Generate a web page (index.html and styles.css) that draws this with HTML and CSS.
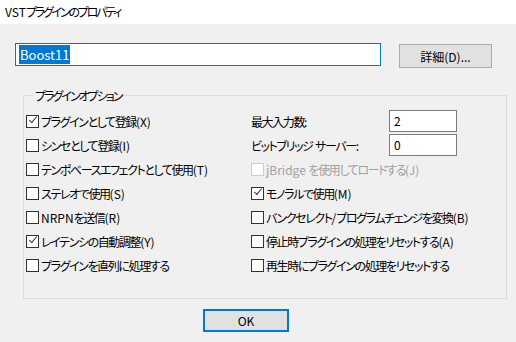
FILE: index.html
```
<!DOCTYPE html>
<html lang="ja">
<head>
    <meta charset="UTF-8">
    <title>VSTプラグインのプロパティ</title>
    <link rel="stylesheet" href="styles.css">
</head>
<body>
    <div class="titlebar"><span class="en">VST</span>プラグインのプロパティ</div>

    <div class="dialog">
        <div class="top-row">
            <div class="name-box"><span class="selected">Boost11</span></div>
            <button class="btn details">詳細(D)...</button>
        </div>

        <div class="group">
            <span class="group-title">プラグインオプション</span>
            <div class="options">
                <label class="check"><span class="box on"></span>プラグインとして登録<span class="en">(X)</span></label>
                <div class="field"><span class="field-label">最大入力数<span class="en">:</span></span><span class="num-box">2</span></div>

                <label class="check"><span class="box"></span>シンセとして登録<span class="en">(I)</span></label>
                <div class="field"><span class="field-label">ビットブリッジ<span class="en"> </span>サーバー<span class="en">:</span></span><span class="num-box">0</span></div>

                <label class="check"><span class="box"></span>テンポベースエフェクトとして使用<span class="en">(T)</span></label>
                <label class="check disabled"><span class="box"></span><span class="en">jBridge </span>を使用してロードする<span class="en">(J)</span></label>

                <label class="check"><span class="box"></span>ステレオで使用<span class="en">(S)</span></label>
                <label class="check"><span class="box on"></span>モノラルで使用<span class="en">(M)</span></label>

                <label class="check"><span class="box"></span><span class="en">NRPN</span>を送信<span class="en">(R)</span></label>
                <label class="check"><span class="box"></span>バンクセレクト<span class="en">/</span>プログラムチェンジを変換<span class="en">(B)</span></label>

                <label class="check"><span class="box on"></span>レイテンシの自動調整<span class="en">(Y)</span></label>
                <label class="check"><span class="box"></span>停止時プラグインの処理をリセットする<span class="en">(A)</span></label>

                <label class="check"><span class="box"></span>プラグインを直列に処理する</label>
                <label class="check"><span class="box"></span>再生時にプラグインの処理をリセットする</label>
            </div>
        </div>

        <div class="bottom-row">
            <button class="btn ok">OK</button>
        </div>
    </div>
</body>
</html>
```

FILE: styles.css
```
body {
    margin: 0;
    background-color: #f0f0f0;
    font-family: "Noto Sans CJK JP", "Noto Sans", sans-serif;
    font-size: 12px;
    font-feature-settings: "palt";
    letter-spacing: -1.4px;
    color: #000;
}
.en {
    letter-spacing: 0;
    white-space: pre;
}
.titlebar {
    height: 24px;
    line-height: 24px;
    background: white;
    padding-left: 5px;
    letter-spacing: -2.2px;
}
.dialog {
    padding: 19px 9px 0 15px;
}
.top-row {
    display: flex;
    align-items: flex-start;
}
.name-box {
    width: 366px;
    height: 23px;
    border: 1px solid #0078d7;
    background: white;
    padding-left: 3px;
    box-sizing: border-box;
    font-size: 13px;
    line-height: 21px;
    letter-spacing: 0;
}
.selected {
    background: #0078d7;
    color: white;
    padding: 0 1px;
}
.btn {
    font-family: inherit;
    font-size: 12px;
    font-feature-settings: "palt";
    letter-spacing: 0;
    background: #e1e1e1;
    border: 1px solid #adadad;
    padding: 0;
    color: #000;
}
.details {
    margin-left: 18px;
    margin-top: 1px;
    width: 93px;
    height: 24px;
}
.group {
    position: relative;
    margin: 27px 0 0 8px;
    width: 484px;
    height: 204px;
    border: 1px solid #dcdcdc;
    padding: 13px 0 0 2px;
    box-sizing: border-box;
}
.group-title {
    position: absolute;
    top: -8px;
    left: 9px;
    padding: 0 2px;
    line-height: 16px;
    background: #f0f0f0;
    letter-spacing: -2px;
}
.options {
    display: grid;
    grid-template-columns: 225px 1fr;
    grid-auto-rows: 24px;
}
.check {
    display: flex;
    align-items: center;
}
.box {
    width: 13px;
    height: 13px;
    border: 1px solid #333;
    background: white;
    box-sizing: border-box;
    margin-right: 2px;
    position: relative;
}
.box.on::after {
    content: "";
    position: absolute;
    left: 1px;
    top: -1px;
    width: 3px;
    height: 7px;
    border: solid #333;
    border-width: 0 1px 1px 0;
    transform: rotate(40deg);
    transform-origin: 100% 100%;
}
.disabled {
    color: #a0a0a0;
}
.disabled .box {
    border-color: #cccccc;
}
.field {
    display: flex;
    align-items: center;
}
.field-label {
    width: 138px;
}
.num-box {
    width: 68px;
    height: 22px;
    border: 1px solid #7a7a7a;
    background: white;
    box-sizing: border-box;
    padding-left: 4px;
    line-height: 20px;
    letter-spacing: 0;
}
.bottom-row {
    padding: 10px 0 0 188px;
}
.ok {
    width: 86px;
    height: 23px;
    border: 2px solid #0078d7;
}
```
